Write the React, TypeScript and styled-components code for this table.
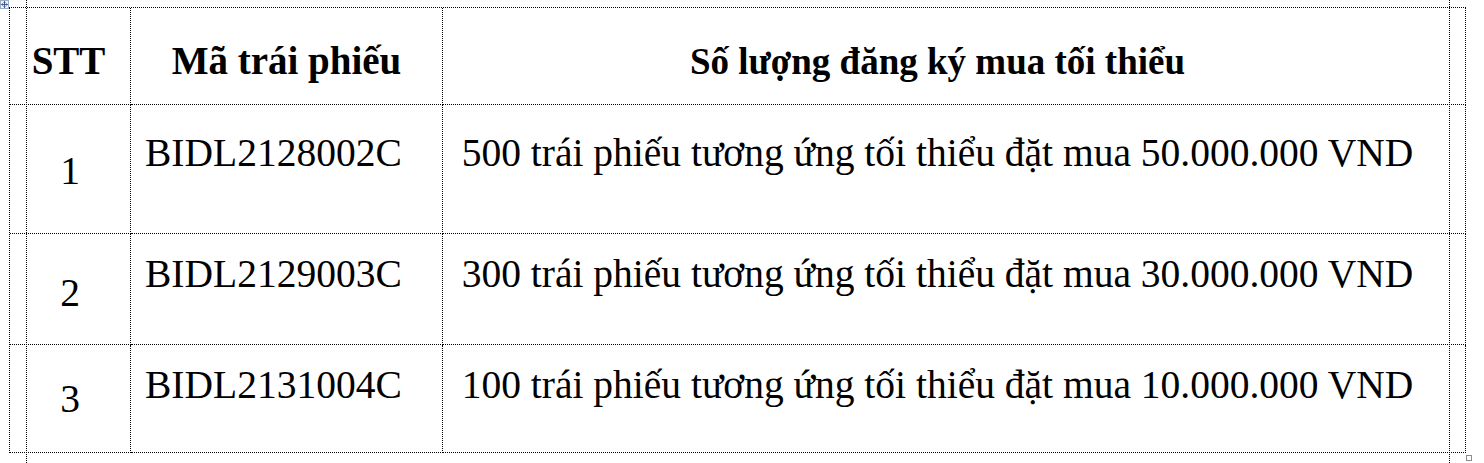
import React from 'react'
import styled, { createGlobalStyle } from 'styled-components'

const GlobalStyle = createGlobalStyle`
  html, body {
    margin: 0;
    padding: 0;
    background: #fff;
  }
  body {
    font-family: "Liberation Serif", "Times New Roman", serif;
    color: #000;
  }
`

type Row = {
  stt: string
  code: string
  qty: string
  height: number
  textTop: number
  numTop: number
}

const rows: Row[] = [
  { stt: '1', code: 'BIDL2128002C', qty: '500 trái phiếu tương ứng tối thiểu đặt mua 50.000.000 VND', height: 129, textTop: 29, numTop: 47 },
  { stt: '2', code: 'BIDL2129003C', qty: '300 trái phiếu tương ứng tối thiểu đặt mua 30.000.000 VND', height: 111, textTop: 21, numTop: 40 },
  { stt: '3', code: 'BIDL2131004C', qty: '100 trái phiếu tương ứng tối thiểu đặt mua 10.000.000 VND', height: 108, textTop: 21, numTop: 35 },
]

const App = () => {
  const heights = [97, ...rows.map(r => r.height)].map(h => h + 'px').join(' ')

  return (
    <Page>
      <GlobalStyle />
      <MoveHandle viewBox="0 0 9 9" width="9" height="9">
        <rect x="0.5" y="0.5" width="8" height="8" fill="#eef2f8" stroke="#9aa9c4" />
        <path d="M4.5 1.5v6M1.5 4.5h6M3.5 2.5l1-1 1 1M3.5 6.5l1 1 1-1M2.5 3.5l-1 1 1 1M6.5 3.5l1 1-1 1" stroke="#2b4a8a" fill="none" strokeWidth="0.9" />
      </MoveHandle>
      <Guide $x={26} />
      <Guide $x={1449} />

      <Table $rows={heights}>
        <Head $size={39} $pr={3}>STT</Head>
        <Head $size={39}>Mã trái phiếu</Head>
        <Head $size={37} $pl={12} $pr={45}>Số lượng đăng ký mua tối thiểu</Head>

        {rows.map(r => (
          <React.Fragment key={r.stt}>
            <Cell $pt={r.numTop}>{r.stt}</Cell>
            <Cell $pt={r.textTop} $pl={14} $left>{r.code}</Cell>
            <Cell $pt={r.textTop} $pl={12} $pr={45}>{r.qty}</Cell>
          </React.Fragment>
        ))}
      </Table>

      <ResizeHandle />
    </Page>
  )
}

const Page = styled.div`
  position: relative;
  height: 463px;
  padding: 7px 0 0 9px;
  box-sizing: border-box;
  overflow: hidden;
`

const MoveHandle = styled.svg`
  position: absolute;
  top: 0;
  left: 0;
`

const Guide = styled.div<{ $x: number }>`
  position: absolute;
  top: 0;
  bottom: 0;
  left: ${p => p.$x}px;
  border-left: 1px dotted #000;
`

const Table = styled.div<{ $rows: string }>`
  display: grid;
  grid-template-columns: 121px 312px 1023px;
  grid-template-rows: ${p => p.$rows};
  width: 1457px;
  box-sizing: border-box;
  border-top: 1px dotted #000;
  border-left: 1px dotted #000;
`

const Cell = styled.div<{ $pt: number; $pl?: number; $pr?: number; $left?: boolean }>`
  box-sizing: border-box;
  border-right: 1px dotted #000;
  border-bottom: 1px dotted #000;
  padding: ${p => p.$pt}px ${p => p.$pr ?? 0}px 0 ${p => p.$pl ?? 0}px;
  font-size: 39.5px;
  line-height: 39.5px;
  text-align: ${p => (p.$left ? 'left' : 'center')};
  white-space: nowrap;
`

// baseline of the header sits at the same height whatever the size
const Head = styled.div<{ $size: number; $pl?: number; $pr?: number }>`
  box-sizing: border-box;
  border-right: 1px dotted #000;
  border-bottom: 1px dotted #000;
  padding: ${p => Math.round(66 - p.$size * 0.8375)}px ${p => p.$pr ?? 0}px 0 ${p => p.$pl ?? 0}px;
  font-size: ${p => p.$size}px;
  line-height: ${p => p.$size}px;
  font-weight: 700;
  text-align: center;
  white-space: nowrap;
`

const ResizeHandle = styled.div`
  position: absolute;
  left: 1466px;
  top: 455px;
  width: 6px;
  height: 6px;
  box-sizing: border-box;
  border: 1px solid #8c8c8c;
  background: #fff;
`

export default App
